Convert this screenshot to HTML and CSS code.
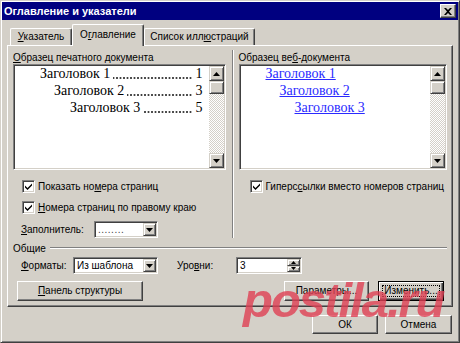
FILE: index.html
```html
<!DOCTYPE html>
<html lang="ru">
<head>
<meta charset="utf-8">
<title>Оглавление и указатели</title>
<link rel="stylesheet" href="styles.css">
</head>
<body>
<div class="window">
  <div class="titlebar">
    <span class="title">Оглавление и указатели</span>
    <span class="close"><svg width="8" height="7" viewBox="0 0 8 7"><path d="M0 0h2l2 2 2-2h2L5 3.5 8 7H6L4 5 2 7H0l3-3.5z" fill="#000"/></svg></span>
  </div>
  <div class="tabs">
    <div class="tab t1"><u>У</u>казатель</div>
    <div class="tab t2 active">О<u>г</u>лавление</div>
    <div class="tab t3">Список илл<u>ю</u>страций</div>
  </div>
  <div class="panel">
    <div class="cols">
      <div class="col left">
        <div class="label"><u>О</u>бразец печатного документа</div>
        <div class="preview">
          <div class="area">
            <div class="entry i1"><span>Заголовок 1</span><span class="dots"></span><span>1</span></div>
            <div class="entry i2"><span>Заголовок 2</span><span class="dots"></span><span>3</span></div>
            <div class="entry i3"><span>Заголовок 3</span><span class="dots"></span><span>5</span></div>
          </div>
          <div class="scroll">
            <div class="sbtn"><svg width="7" height="4" viewBox="0 0 7 4"><path d="M3.5 0L7 4H0z"/></svg></div>
            <div class="thumb"></div>
            <div class="track"></div>
            <div class="sbtn"><svg width="7" height="4" viewBox="0 0 7 4"><path d="M0 0h7L3.5 4z"/></svg></div>
          </div>
        </div>
        <div class="check first"><span class="box"><svg width="7" height="7" viewBox="0 0 7 7"><path d="M0 2.5l2.5 2.5L7 0.5v2L2.5 7 0 4.5z"/></svg></span><span>Показать но<u>м</u>ера страниц</span></div>
        <div class="check second"><span class="box"><svg width="7" height="7" viewBox="0 0 7 7"><path d="M0 2.5l2.5 2.5L7 0.5v2L2.5 7 0 4.5z"/></svg></span><span><u>Н</u>омера страниц по правому краю</span></div>
        <div class="fillrow">
          <span class="flabel"><u>З</u>аполнитель:</span>
          <div class="combo cfill"><span class="val dotsval">........</span><span class="dd"><svg width="7" height="4" viewBox="0 0 7 4"><path d="M0 0h7L3.5 4z"/></svg></span></div>
        </div>
      </div>
      <div class="sep"></div>
      <div class="col right">
        <div class="label">Образец ве<u>б</u>-документа</div>
        <div class="preview">
          <div class="area">
            <div class="link i1"><span>Заголовок 1</span></div>
            <div class="link i2"><span>Заголовок 2</span></div>
            <div class="link i3r"><span>Заголовок 3</span></div>
          </div>
          <div class="scroll">
            <div class="sbtn"><svg width="7" height="4" viewBox="0 0 7 4"><path d="M3.5 0L7 4H0z"/></svg></div>
            <div class="thumb"></div>
            <div class="track"></div>
            <div class="sbtn"><svg width="7" height="4" viewBox="0 0 7 4"><path d="M0 0h7L3.5 4z"/></svg></div>
          </div>
        </div>
        <div class="check first"><span class="box"><svg width="7" height="7" viewBox="0 0 7 7"><path d="M0 2.5l2.5 2.5L7 0.5v2L2.5 7 0 4.5z"/></svg></span><span>Гиперс<u>с</u>ылки вместо номеров страниц</span></div>
      </div>
    </div>
    <div class="group"><span>Общие</span><span class="gline"></span></div>
    <div class="fmtrow">
      <span class="fmtlabel"><u>Ф</u>орматы:</span>
      <div class="combo cfmt"><span class="val">Из шаблона</span><span class="dd"><svg width="7" height="4" viewBox="0 0 7 4"><path d="M0 0h7L3.5 4z"/></svg></span></div>
      <span class="lvllabel">Уро<u>в</u>ни:</span>
      <div class="spin"><span class="val">3</span><span class="spinbtns"><span class="sp"><svg width="5" height="3" viewBox="0 0 5 3"><path d="M2.5 0L5 3H0z"/></svg></span><span class="sp"><svg width="5" height="3" viewBox="0 0 5 3"><path d="M0 0h5L2.5 3z"/></svg></span></span></div>
    </div>
    <div class="btnrow">
      <div class="btn bpanel"><u>П</u>анель структуры</div>
      <div class="btn bparam">Параметры...</div>
      <div class="btn bedit default">Изменить...</div>
    </div>
  </div>
  <div class="bottom">
    <div class="btn bok">ОК</div>
    <div class="btn bcancel">Отмена</div>
  </div>
  <div class="watermark">postila.ru</div>
</div>
</body>
</html>
```
FILE: styles.css
```css
html, body {
  margin: 0;
  padding: 0;
  background: #d4d0c8;
}
.window {
  position: relative;
  width: 460px;
  height: 343px;
  box-sizing: border-box;
  background: #d4d0c8;
  border: 1px solid;
  border-color: #d4d0c8 #404040 #404040 #d4d0c8;
  box-shadow: inset 1px 1px #fff, inset -1px -1px #808080;
  padding: 1px;
  font-family: "Liberation Sans", Arial, sans-serif;
  font-size: 10px;
  color: #000;
  overflow: hidden;
}
u { text-decoration: underline; text-underline-offset: 1px; }
.titlebar {
  height: 18px;
  background: #000080;
  display: flex;
  align-items: center;
  justify-content: space-between;
  padding: 0 2px 0 2px;
}
.title {
  color: #fff;
  font-weight: bold;
  font-size: 11px;
}
.close {
  width: 16px;
  height: 14px;
  box-sizing: border-box;
  background: #d4d0c8;
  border: 1px solid;
  border-color: #fff #404040 #404040 #fff;
  box-shadow: inset -1px -1px #808080;
  display: flex;
  align-items: center;
  justify-content: center;
}
.tabs {
  display: flex;
  align-items: flex-end;
  height: 20px;
  margin-top: 5px;
  padding-left: 8px;
}
.tab {
  height: 17px;
  box-sizing: border-box;
  border-top: 1px solid #fff;
  border-left: 1px solid #fff;
  border-right: 1px solid #404040;
  box-shadow: inset -1px 0 #808080;
  border-radius: 2px 2px 0 0;
  text-align: center;
  line-height: 16px;
}
.t1 { width: 62px; }
.t2 { width: 72px; }
.t3 { width: 111px; }
.tab.active {
  height: 22px;
  margin-bottom: -1px;
  position: relative;
  z-index: 1;
  background: #d4d0c8;
  line-height: 20px;
}
.panel {
  margin-left: 5px;
  width: 446px;
  height: 262px;
  box-sizing: border-box;
  border: 1px solid;
  border-color: #fff #404040 #404040 #fff;
  box-shadow: inset -1px -1px #808080;
  padding: 6px 5px 0 5px;
}
.cols { display: flex; }
.col.left { width: 213px; }
.col.right { width: 209px; }
.sep {
  width: 0;
  margin: -2px 5px 0 6px;
  border-left: 1px solid #808080;
  border-right: 1px solid #fff;
}
.label {
  height: 12px;
  line-height: 12px;
  white-space: nowrap;
}
.preview {
  height: 106px;
  box-sizing: border-box;
  border: 1px solid;
  border-color: #808080 #fff #fff #808080;
  box-shadow: inset 1px 1px #404040, inset -1px -1px #d4d0c8;
  padding: 1px;
  display: flex;
  background: #d4d0c8;
}
.area {
  flex: 1;
  background: #fff;
  font-family: "Liberation Serif", "Times New Roman", serif;
  font-size: 14px;
  line-height: 17px;
  padding-right: 6px;
  min-width: 0;
}
.area > :first-child { margin-top: -1px; }
.entry {
  display: flex;
  white-space: nowrap;
}
.entry .dots {
  flex: 1;
  margin-left: 3px;
  margin-right: 3px;
  background-image: radial-gradient(circle at center, #000 0.55px, rgba(0,0,0,0) 1px);
  background-size: 3.5px 2px;
  background-repeat: repeat-x;
  background-position: right 0 top 12px;
}
.i1 { margin-left: 25px; }
.i2 { margin-left: 39px; }
.i3 { margin-left: 55px; }
.i3r { margin-left: 54px; }
.link span {
  color: #2a2aff;
  text-decoration: underline;
}
.scroll {
  width: 15px;
  display: flex;
  flex-direction: column;
}
.sbtn, .thumb, .dd, .sp {
  box-sizing: border-box;
  background: #d4d0c8;
  border: 1px solid;
  border-color: #d4d0c8 #404040 #404040 #d4d0c8;
  box-shadow: inset 1px 1px #fff, inset -1px -1px #808080;
  display: flex;
  align-items: center;
  justify-content: center;
}
.sbtn { height: 15px; }
.thumb { height: 13px; }
.track {
  flex: 1;
  background: repeating-conic-gradient(#d4d0c8 0 25%, #fff 0 50%) 0 0 / 2px 2px;
}
.check {
  display: flex;
  align-items: center;
  height: 13px;
  padding-left: 9px;
  gap: 3px;
  white-space: nowrap;
}
.check.first { margin-top: 10px; }
.check.second { margin-top: 8px; }
.col.right .check { padding-left: 11px; }
.box {
  width: 13px;
  height: 13px;
  box-sizing: border-box;
  background: #fff;
  border: 1px solid;
  border-color: #808080 #fff #fff #808080;
  box-shadow: inset 1px 1px #404040, inset -1px -1px #d4d0c8;
  display: flex;
  align-items: center;
  justify-content: center;
}
.fillrow {
  margin-top: 7px;
  height: 17px;
  display: flex;
  align-items: center;
  padding-left: 8px;
}
.flabel { width: 73px; }
.combo, .spin {
  height: 17px;
  box-sizing: border-box;
  border: 1px solid;
  border-color: #808080 #fff #fff #808080;
  box-shadow: inset 1px 1px #404040, inset -1px -1px #d4d0c8;
  padding: 1px;
  display: flex;
  background: #fff;
}
.combo .val, .spin .val {
  flex: 1;
  background: #fff;
  padding-left: 2px;
  line-height: 13px;
  white-space: nowrap;
  overflow: hidden;
}
.dotsval { color: #444; letter-spacing: 0.5px; }
.dd { width: 13px; }
.cfill { width: 64px; }
.group {
  margin-top: 4px;
  height: 12px;
  display: flex;
  align-items: center;
}
.gline {
  flex: 1;
  margin-left: 4px;
  height: 0;
  border-top: 1px solid #808080;
  border-bottom: 1px solid #fff;
}
.fmtrow {
  margin-top: 3px;
  height: 17px;
  display: flex;
  align-items: center;
  padding-left: 8px;
}
.fmtlabel { width: 52px; }
.cfmt { width: 85px; }
.lvllabel { margin-left: 19px; width: 59px; }
.spin { width: 66px; }
.spinbtns {
  width: 13px;
  display: flex;
  flex-direction: column;
}
.sp { flex: 1; }
.btnrow {
  margin-top: 7px;
  display: flex;
}
.btn {
  position: relative;
  height: 20px;
  box-sizing: border-box;
  background: #d4d0c8;
  border: 1px solid;
  border-color: #fff #404040 #404040 #fff;
  box-shadow: inset -1px -1px #808080;
  text-align: center;
  line-height: 18px;
  white-space: nowrap;
}
.bpanel { width: 126px; margin-left: 4px; }
.bparam { width: 85px; margin-left: auto; }
.bedit { width: 66px; margin-left: 9px; margin-right: 3px; }
.btn.default {
  border-color: #000;
  box-shadow: inset 1px 1px #fff, inset -1px -1px #404040, inset -2px -2px #808080;
}
.btn.default::after {
  content: "";
  position: absolute;
  left: 3px;
  top: 3px;
  right: 3px;
  bottom: 3px;
  border: 1px dotted #000;
}
.bottom {
  margin-top: 8px;
  display: flex;
  justify-content: flex-end;
  gap: 7px;
  padding-right: 6px;
}
.bok { width: 66px; height: 19px; }
.bcancel { width: 67px; height: 19px; }
.watermark {
  position: absolute;
  left: 242px;
  top: 275px;
  font-family: "Liberation Sans", Arial, sans-serif;
  font-weight: bold;
  font-style: italic;
  font-size: 49px;
  line-height: 49px;
  letter-spacing: -2px;
  color: rgba(222, 64, 84, 0.8);
  white-space: nowrap;
  pointer-events: none;
}
```
